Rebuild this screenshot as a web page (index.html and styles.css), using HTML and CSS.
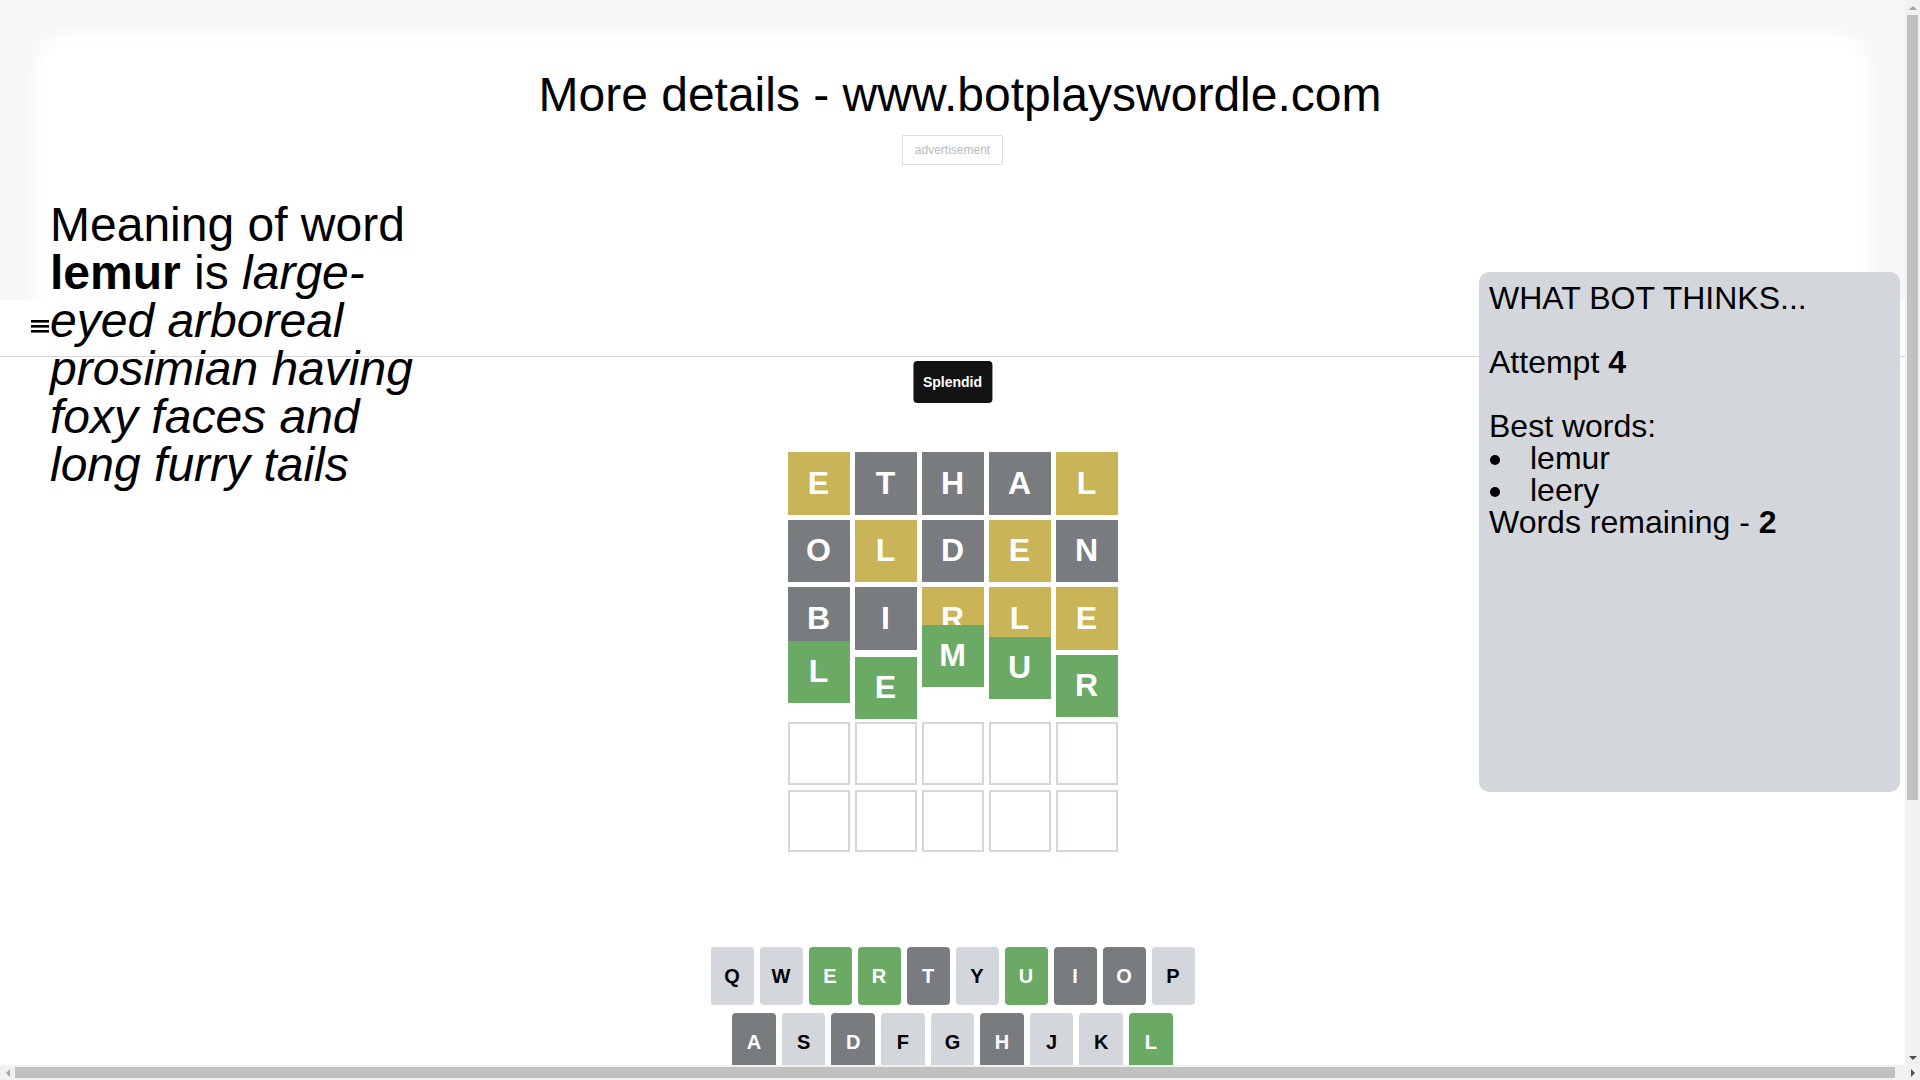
FILE: index.html
```html
<!DOCTYPE html>
<html lang="en">
<head>
<meta charset="utf-8">
<title>Bot plays Wordle</title>
<link rel="stylesheet" href="styles.css">
</head>
<body>
<div class="page">
  <div class="top">
    <div class="top-inner">
      <h1 class="promo">More details - www.botplayswordle.com</h1>
      <div class="ad-label">advertisement</div>
    </div>
  </div>

  <header class="app-header">
    <button class="menu-btn" aria-label="menu">
      <svg width="18" height="13" viewBox="0 0 18 13"><rect x="0" y="0" width="18" height="2.6" fill="#000"/><rect x="0" y="5" width="18" height="2.6" fill="#000"/><rect x="0" y="10" width="18" height="2.6" fill="#000"/></svg>
    </button>
  </header>

  <main class="game">
    <div class="toast">Splendid</div>
    <div class="board">
      <div class="row">
        <div class="tile present">E</div><div class="tile absent">T</div><div class="tile absent">H</div><div class="tile absent">A</div><div class="tile present">L</div>
      </div>
      <div class="row">
        <div class="tile absent">O</div><div class="tile present">L</div><div class="tile absent">D</div><div class="tile present">E</div><div class="tile absent">N</div>
      </div>
      <div class="row">
        <div class="tile absent">B</div><div class="tile absent">I</div><div class="tile present">R</div><div class="tile present">L</div><div class="tile present">E</div>
      </div>
      <div class="row">
        <div class="tile correct bounce-a">L</div><div class="tile correct bounce-b">E</div><div class="tile correct bounce-c">M</div><div class="tile correct bounce-d">U</div><div class="tile correct">R</div>
      </div>
      <div class="row">
        <div class="tile empty"></div><div class="tile empty"></div><div class="tile empty"></div><div class="tile empty"></div><div class="tile empty"></div>
      </div>
      <div class="row">
        <div class="tile empty"></div><div class="tile empty"></div><div class="tile empty"></div><div class="tile empty"></div><div class="tile empty"></div>
      </div>
    </div>

    <div class="keyboard">
      <div class="kb-row">
        <button class="key">Q</button><button class="key">W</button><button class="key correct">E</button><button class="key correct">R</button><button class="key absent">T</button><button class="key">Y</button><button class="key correct">U</button><button class="key absent">I</button><button class="key absent">O</button><button class="key">P</button>
      </div>
      <div class="kb-row">
        <div class="spacer"></div>
        <button class="key absent">A</button><button class="key">S</button><button class="key absent">D</button><button class="key">F</button><button class="key">G</button><button class="key absent">H</button><button class="key">J</button><button class="key">K</button><button class="key correct">L</button>
        <div class="spacer"></div>
      </div>
      <div class="kb-row">
        <button class="key wide small">ENTER</button><button class="key">Z</button><button class="key">X</button><button class="key">C</button><button class="key">V</button><button class="key absent">B</button><button class="key absent">N</button><button class="key correct">M</button>
        <button class="key wide" aria-label="backspace"><svg width="24" height="24" viewBox="0 0 24 24"><path fill="#1a1a1b" d="M22 3H7c-.69 0-1.23.35-1.59.88L0 12l5.41 8.11c.36.53.9.89 1.59.89h15c1.1 0 2-.9 2-2V5c0-1.1-.9-2-2-2zm0 16H7.07L2.4 12l4.66-7H22v14zm-11.59-2L14 13.41 17.59 17 19 15.59 15.41 12 19 8.41 17.59 7 14 10.59 10.41 7 9 8.41 12.59 12 9 15.59z"/></svg></button>
      </div>
    </div>
  </main>

  <div class="meaning">Meaning of word <b>lemur</b> is <i>large-eyed arboreal prosimian having foxy faces and long furry tails</i></div>

  <aside class="bot-panel">
    WHAT BOT THINKS...<br><br>
    Attempt <b>4</b><br><br>
    Best words:
    <ul class="best">
      <li>lemur</li>
      <li>leery</li>
    </ul>
    Words remaining - <b>2</b>
  </aside>
</div>

<div class="vscroll">
  <span class="arrow arrow-up"></span>
  <div class="vthumb"></div>
  <span class="arrow arrow-down"></span>
</div>
<div class="hscroll">
  <span class="arrow arrow-left"></span>
  <div class="hthumb"></div>
  <span class="arrow arrow-right"></span>
</div>
</body>
</html>
```

FILE: styles.css
```css
html, body {
  margin: 0;
  padding: 0;
}
body {
  font-family: "Liberation Sans", Arial, sans-serif;
  color: #000;
  background: #fff;
}
.page {
  position: relative;
  width: 1905px;
}

/* top promo area */
.top {
  height: 300px;
  box-sizing: border-box;
  padding: 32px 35px 0;
  background: #f6f6f6;
  overflow: hidden;
}
.top-inner {
  position: relative;
  isolation: isolate;
  height: 100%;
  box-sizing: border-box;
  padding-top: 35px;
}
.top-inner::before {
  content: "";
  position: absolute;
  left: 0;
  right: 0;
  top: 0;
  bottom: -60px;
  z-index: -1;
  background: #fff;
  border-radius: 34px;
  filter: blur(9px);
}
.promo {
  width: 1920px;
  margin: 0 0 13px -35px;
  font-size: 48px;
  font-weight: 400;
  line-height: normal;
  text-align: center;
}
.ad-label {
  width: fit-content;
  margin: 0 auto;
  padding: 7px 12px;
  font-size: 12px;
  line-height: 14px;
  color: #b9b9b9;
  border: 1px solid #dedede;
}

/* header */
.app-header {
  height: 56px;
  border-bottom: 1px solid #d3d6da;
  background: #fff;
  display: flex;
  align-items: center;
  padding: 0 31px;
}
.menu-btn {
  background: none;
  border: 0;
  padding: 0;
  margin-top: -3px;
  display: flex;
}

/* game */
.game {
  position: relative;
  width: 500px;
  margin: 0 auto;
  padding: 85px 0 259px;
}
.toast {
  position: absolute;
  top: 4px;
  left: 50%;
  transform: translateX(-50%);
  background: #121212;
  color: #fff;
  font-size: 14px;
  line-height: 16px;
  font-weight: 700;
  padding: 13px 10px;
  border-radius: 4px;
  white-space: nowrap;
}
.board {
  width: 350px;
  height: 420px;
  box-sizing: border-box;
  padding: 10px;
  margin: 0 auto;
  display: grid;
  grid-template-rows: repeat(6, 1fr);
  gap: 5px;
}
.row {
  display: grid;
  grid-template-columns: repeat(5, 1fr);
  gap: 5px;
}
.tile {
  box-sizing: border-box;
  display: flex;
  align-items: center;
  justify-content: center;
  font-size: 32px;
  font-weight: 700;
  color: #fff;
}
.tile.empty { border: 2px solid #d3d6da; }
.tile.correct { background: #6aaa64; }
.tile.present { background: #c9b458; }
.tile.absent { background: #787c7e; }
.bounce-a { transform: translateY(-14px); }
.bounce-b { transform: translateY(2px); }
.bounce-c { transform: translateY(-30px); }
.bounce-d { transform: translateY(-18px); }

/* keyboard */
.keyboard {
  margin-top: 85px;
  padding: 0 8px;
}
.kb-row {
  display: flex;
  margin-bottom: 8px;
}
.spacer { flex: 0.5; }
.key {
  flex: 1;
  height: 58px;
  margin: 0 6px 0 0;
  padding: 0;
  border: 0;
  border-radius: 4px;
  background: #d3d6da;
  color: #000;
  font-family: "Liberation Sans", Arial, sans-serif;
  font-size: 20px;
  font-weight: 700;
  display: flex;
  align-items: center;
  justify-content: center;
}
.key:last-of-type { margin-right: 0; }
.key.correct { background: #6aaa64; color: #fff; }
.key.absent { background: #787c7e; color: #fff; }
.key.wide { flex: 1.5; }
.key.small { font-size: 12px; }

/* overlays */
.meaning {
  position: absolute;
  left: 50px;
  top: 201px;
  width: 390px;
  font-size: 48px;
  line-height: 48px;
}
.bot-panel {
  position: absolute;
  top: 272px;
  right: 5px;
  width: 421px;
  height: 520px;
  box-sizing: border-box;
  padding: 10px;
  background: #d3d6da;
  border-radius: 10px;
  font-size: 32px;
  line-height: 32px;
}
.best {
  list-style: none;
  margin: 0;
  padding: 0;
}
.best li {
  position: relative;
  padding-left: 41px;
}
.best li::before {
  content: "";
  position: absolute;
  left: 1px;
  top: 13px;
  width: 10px;
  height: 10px;
  border-radius: 50%;
  background: #000;
}

/* browser scrollbars as seen in the capture */
.vscroll {
  position: fixed;
  top: 0;
  right: 0;
  width: 15px;
  height: 1065px;
  background: #f1f1f1;
  display: flex;
  flex-direction: column;
  align-items: center;
}
.vthumb {
  width: 11px;
  height: 785px;
  background: #c1c1c1;
}
.hscroll {
  position: fixed;
  left: 0;
  bottom: 0;
  width: 1920px;
  height: 15px;
  background: #f1f1f1;
  display: flex;
  align-items: center;
}
.hthumb {
  width: 1880px;
  height: 11px;
  background: #c1c1c1;
}
.arrow {
  width: 15px;
  height: 15px;
  flex: none;
  display: flex;
  align-items: center;
  justify-content: center;
}
.arrow::before {
  content: "";
  border: 4px solid transparent;
}
.arrow-up::before { border-bottom: 4px solid #a3a3a3; border-top-width: 0; }
.arrow-down { margin-top: auto; }
.arrow-down::before { border-top: 4px solid #505050; border-bottom-width: 0; }
.arrow-left::before { border-right: 4px solid #a3a3a3; border-left-width: 0; }
.arrow-right { margin-left: auto; }
.arrow-right::before { border-left: 4px solid #505050; border-right-width: 0; }
```
